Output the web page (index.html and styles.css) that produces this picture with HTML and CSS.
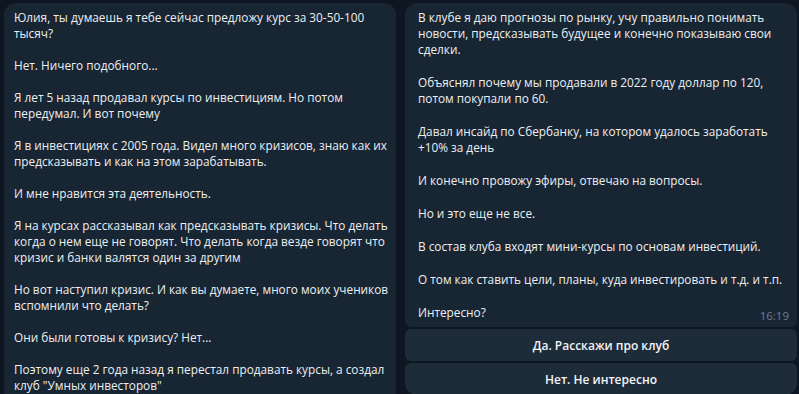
FILE: index.html
```html
<!DOCTYPE html>
<html lang="ru">
<head>
    <meta charset="UTF-8">
    <meta name="viewport" content="width=device-width, initial-scale=1.0">
    <title>Чат</title>
    <link rel="stylesheet" href="styles.css">
</head>
<body>
    <div class="chat">
        <div class="column">
            <div class="bubble bubble-left">
                <p>Юлия, ты думаешь я тебе сейчас предложу курс за 30-50-100 тысяч?</p>
                <p>Нет. Ничего подобного...</p>
                <p>Я лет 5 назад продавал курсы по инвестициям. Но потом передумал. И вот почему</p>
                <p>Я в инвестициях с 2005 года. Видел много кризисов, знаю как их предсказывать и как на этом зарабатывать.</p>
                <p>И мне нравится эта деятельность.</p>
                <p>Я на курсах рассказывал как предсказывать кризисы. Что делать когда о нем еще не говорят. Что делать когда везде говорят что кризис и банки валятся один за другим</p>
                <p>Но вот наступил кризис. И как вы думаете, много моих учеников вспомнили что делать?</p>
                <p>Они были готовы к кризису? Нет...</p>
                <p>Поэтому еще 2 года назад я перестал продавать курсы, а создал клуб "Умных инвесторов"</p>
            </div>
        </div>

        <div class="column">
            <div class="bubble bubble-right">
                <p>В клубе я даю прогнозы по рынку, учу правильно понимать новости, предсказывать будущее и конечно показываю свои сделки.</p>
                <p>Объяснял почему мы продавали в 2022 году доллар по 120, потом покупали по 60.</p>
                <p>Давал инсайд по Сбербанку, на котором удалось заработать +10% за день</p>
                <p>И конечно провожу эфиры, отвечаю на вопросы.</p>
                <p>Но и это еще не все.</p>
                <p>В состав клуба входят мини-курсы по основам инвестиций.</p>
                <p>О том как ставить цели, планы, куда инвестировать и т.д. и т.п.</p>
                <p class="last">Интересно? <span class="time">16:19</span></p>
            </div>
            <div class="buttons">
                <button class="inline-btn btn-top">Да. Расскажи про клуб</button>
                <button class="inline-btn btn-bottom">Нет. Не интересно</button>
            </div>
        </div>
    </div>
</body>
</html>
```

FILE: styles.css
```css
body {
    margin: 0;
    background-color: #0e1621;
    font-family: "Open Sans", "Noto Sans", sans-serif;
    font-size: 11.8px;
    color: #eef0f2;
    height: 394px;
    overflow: hidden;
}
.chat {
    display: flex;
    gap: 9px;
    padding: 3px 2px 0 4px;
}
.column {
    flex: 1;
    display: flex;
    flex-direction: column;
}
.bubble {
    background-color: #182533;
    padding: 6px 12px 6px 10px;
    line-height: 16px;
}
.bubble p {
    margin: 0 0 16px 0;
}
.bubble-left {
    border-radius: 12px 12px 0 0;
    min-height: 400px;
    padding-right: 4px;
}
.bubble-right {
    border-radius: 12px 12px 6px 6px;
    padding: 6px 8px 7px 13px;
}
.bubble-right p {
    margin-bottom: 17px;
}
.bubble-right p.last {
    margin-bottom: 0;
    display: flex;
    justify-content: space-between;
    align-items: flex-end;
}
.time {
    font-size: 11.5px;
    color: #6d7f8f;
    position: relative;
    top: 4px;
}
.buttons {
    display: flex;
    flex-direction: column;
    gap: 2px;
    margin-top: 2px;
}
.inline-btn {
    background-color: #1e2c3a;
    color: #f2f4f6;
    border: none;
    height: 32px;
    font-family: "Open Sans", "Noto Sans", sans-serif;
    font-size: 12px;
    font-weight: 600;
    border-radius: 6px;
}
.btn-bottom {
    border-radius: 6px 6px 12px 12px;
}
```
